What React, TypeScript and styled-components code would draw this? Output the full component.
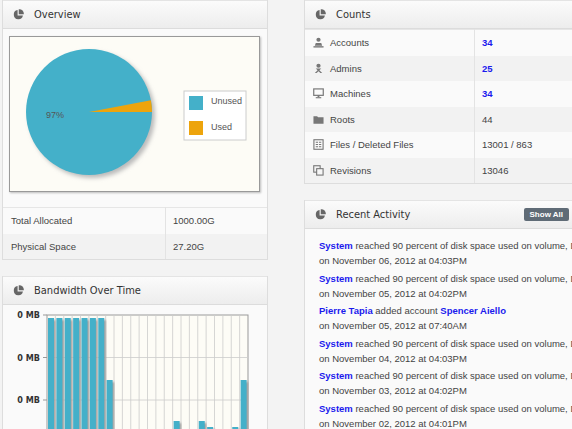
import React from "react";
import styled, { createGlobalStyle } from "styled-components";

const Global = createGlobalStyle`
  body { margin:0; background:#f3f3f3; font-family:"Liberation Sans", Arial, sans-serif; font-size:10px; color:#444; overflow:hidden; }
`;

const counts = [
  { icon: "user", label: "Accounts", value: "34", link: true },
  { icon: "admin", label: "Admins", value: "25", link: true },
  { icon: "monitor", label: "Machines", value: "34", link: true },
  { icon: "folder", label: "Roots", value: "44" },
  { icon: "files", label: "Files / Deleted Files", value: "13001 / 863" },
  { icon: "rev", label: "Revisions", value: "13046" },
];

const activity = [
  { who: "System", text: " reached 90 percent of disk space used on volume, D:", when: "on November 06, 2012 at 04:03PM" },
  { who: "System", text: " reached 90 percent of disk space used on volume, D:", when: "on November 05, 2012 at 04:02PM" },
  { who: "Pierre Tapia", text: " added account ", target: "Spencer Aiello", when: "on November 05, 2012 at 07:40AM" },
  { who: "System", text: " reached 90 percent of disk space used on volume, D:", when: "on November 04, 2012 at 04:03PM" },
  { who: "System", text: " reached 90 percent of disk space used on volume, D:", when: "on November 03, 2012 at 04:02PM" },
  { who: "System", text: " reached 90 percent of disk space used on volume, D:", when: "on November 02, 2012 at 04:01PM" },
];

// bar tops in px from plot top (plot top = 0), null = below view
const bars: (number | null)[] = [3, 3, 3, 3, 3, 3, 3, 65, null, null, null, null, null, null, null, 106, null, null, 106, 112, null, null, 112, 65];

const PieIcon = () => (
  <svg width="11" height="11" viewBox="0 0 12 12">
    <path d="M5 1.2A5 5 0 1 0 10.8 7H5z" fill="#666" />
    <path d="M6.3 0.2A5 5 0 0 1 11.8 5.7H6.3z" fill="#666" />
  </svg>
);

const RowIcon = ({ kind }: { kind: string }) => {
  const c = "#777";
  switch (kind) {
    case "user":
      return (<svg width="11" height="11" viewBox="0 0 12 12"><circle cx="6" cy="3" r="2.3" fill={c} /><path d="M3 6.5h6l1 3H2z" fill={c} /><rect x="0.5" y="10" width="11" height="1.5" fill={c} /></svg>);
    case "admin":
      return (<svg width="11" height="11" viewBox="0 0 12 12"><circle cx="6" cy="3" r="2.3" fill={c} /><path d="M3 6h6l-2 2 3 3H8L6 9 4 11H2l3-3z" fill={c} /></svg>);
    case "monitor":
      return (<svg width="11" height="11" viewBox="0 0 12 12"><rect x="0.8" y="1" width="10.4" height="7" fill="none" stroke={c} strokeWidth="1.3" /><rect x="5" y="8" width="2" height="2" fill={c} /><rect x="3" y="10" width="6" height="1.2" fill={c} /></svg>);
    case "folder":
      return (<svg width="11" height="11" viewBox="0 0 12 12"><path d="M0.5 2.5h4l1 1h6v7h-11z" fill={c} /></svg>);
    case "files":
      return (<svg width="11" height="11" viewBox="0 0 12 12"><rect x="1" y="0.8" width="10" height="10.4" fill="none" stroke={c} strokeWidth="1.2" /><path d="M3 3.5h2.5M6.5 3.5H9M3 6h2.5M6.5 6H9M3 8.5h2.5M6.5 8.5H9" stroke={c} strokeWidth="1.2" /></svg>);
    default:
      return (<svg width="11" height="11" viewBox="0 0 12 12"><rect x="0.8" y="0.8" width="7" height="7" fill="none" stroke={c} strokeWidth="1.2" /><rect x="4" y="4" width="7" height="7" fill="#f6f6f6" stroke={c} strokeWidth="1.2" /></svg>);
  }
};

const Pie = () => {
  const cx = 79, cy = 75, r = 63;
  const a = (-10.8 * Math.PI) / 180;
  const x2 = cx + r * Math.cos(a), y2 = cy + r * Math.sin(a);
  return (
    <svg width="249" height="154" viewBox="0 0 249 154">
      <defs>
        <filter id="sh" x="-20%" y="-20%" width="140%" height="140%">
          <feGaussianBlur stdDeviation="2" />
        </filter>
      </defs>
      <circle cx={cx + 3} cy={cy + 3} r={r} fill="#bbb" filter="url(#sh)" />
      <circle cx={cx} cy={cy} r={r} fill="#44b0c9" />
      <path d={`M${cx} ${cy}L${cx + r} ${cy}A${r} ${r} 0 0 0 ${x2} ${y2}Z`} fill="#eda40c" />
      <text x="36" y="81" fontSize="9" fill="#555" fontFamily="Liberation Sans, Arial, sans-serif">97%</text>
      <rect x="174" y="54" width="62" height="49" fill="#fff" stroke="#ccc" strokeWidth="1" />
      <rect x="179" y="59" width="14" height="14" fill="#44b0c9" />
      <rect x="179" y="84" width="14" height="14" fill="#eda40c" />
      <text x="201" y="67" fontSize="9" fill="#555" fontFamily="Liberation Sans, Arial, sans-serif">Unused</text>
      <text x="201" y="93" fontSize="9" fill="#555" fontFamily="Liberation Sans, Arial, sans-serif">Used</text>
    </svg>
  );
};

const BarChart = () => {
  const left = 44, top = 10, w = 201, colW = w / 24, h = 200;
  const ticks = [top, top + 42.5, top + 85];
  return (
    <svg width="265" height="130" viewBox="0 0 265 130">
      <defs>
        <filter id="bs"><feGaussianBlur stdDeviation="0.8" /></filter>
      </defs>
      <rect x={left} y={top} width={w} height={h} fill="#fdfcf6" stroke="#999" />
      {Array.from({ length: 23 }, (_, i) => (
        <line key={i} x1={left + colW * (i + 1)} x2={left + colW * (i + 1)} y1={top} y2={top + h} stroke="#ccc" strokeWidth="0.8" />
      ))}
      {ticks.slice(1).map((y) => (
        <line key={y} x1={left} x2={left + w} y1={y} y2={y} stroke="#ccc" strokeWidth="0.8" />
      ))}
      {ticks.map((y) => (
        <g key={y}>
          <line x1={left - 4} x2={left} y1={y} y2={y} stroke="#999" />
          <text x={left - 7} y={y + 3} textAnchor="end" fontSize="9" fill="#333" fontWeight="bold" fontFamily="DejaVu Sans Condensed, sans-serif">0 MB</text>
        </g>
      ))}
      {bars.map((t, i) =>
        t === null ? null : (
          <g key={i}>
            <rect x={left + colW * i + 2.5} y={top + t + 2} width={6} height={h} fill="#999" filter="url(#bs)" />
            <rect x={left + colW * i + 1} y={top + t} width={6} height={h} fill="#44b0c9" />
          </g>
        )
      )}
    </svg>
  );
};

export default function App() {
  return (
    <>
      <Global />
      <Page>
        <Column>
          <Panel>
            <PanelHead><PieIcon /><HeadTitle>Overview</HeadTitle></PanelHead>
            <ChartArea>
              <ChartBox><Pie /></ChartBox>
            </ChartArea>
            <Table>
              <tbody>
                <Tr><Td>Total Allocated</Td><Td>1000.00G</Td></Tr>
                <Tr alt><Td>Physical Space</Td><Td>27.20G</Td></Tr>
              </tbody>
            </Table>
          </Panel>
          <Panel>
            <PanelHead><PieIcon /><HeadTitle>Bandwidth Over Time</HeadTitle></PanelHead>
            <BarChart />
          </Panel>
        </Column>
        <Column>
          <Panel>
            <PanelHead><PieIcon /><HeadTitle>Counts</HeadTitle></PanelHead>
            <Table>
              <tbody>
                {counts.map((c, i) => (
                  <Tr key={c.label} alt={i % 2 === 1}>
                    <Td wide><Label><RowIcon kind={c.icon} />{c.label}</Label></Td>
                    <Td>{c.link ? <Num>{c.value}</Num> : c.value}</Td>
                  </Tr>
                ))}
              </tbody>
            </Table>
          </Panel>
          <Panel>
            <PanelHead>
              <PieIcon /><HeadTitle>Recent Activity</HeadTitle>
              <ShowAll>Show All</ShowAll>
            </PanelHead>
            <Feed>
              {activity.map((a, i) => (
                <Item key={i}>
                  <div><A>{a.who}</A>{a.text}{a.target && <A>{a.target}</A>}</div>
                  <div>{a.when}</div>
                </Item>
              ))}
            </Feed>
          </Panel>
        </Column>
      </Page>
    </>
  );
}

const Page = styled.div`display:grid; grid-template-columns:266px 276px; column-gap:36px; padding:0 0 0 2px; width:700px;`;
const Column = styled.div`display:flex; flex-direction:column; gap:16px;`;
const Panel = styled.div`background:#fafafa; border:1px solid #ddd; border-top:none;`;
const PanelHead = styled.div`
  height:27px; display:flex; align-items:center; gap:10px; padding:0 10px;
  background:linear-gradient(#fbfbfb, #ededed); border-bottom:1px solid #dcdcdc; border-top:1px solid #e4e4e4;
`;
const HeadTitle = styled.div`flex:1; font-family:"DejaVu Sans Condensed", sans-serif; font-size:11px; color:#333; margin-top:-1px;`;
const ShowAll = styled.button`
  background:#5f6b76; color:#fff; border:none; border-radius:2px; font-family:"Liberation Sans", Arial, sans-serif;
  font-size:8px; font-weight:bold; padding:2px 6px; height:13px; line-height:9px;
`;
const ChartArea = styled.div`padding:7px 7px 15px 6px;`;
const ChartBox = styled.div`width:249px; height:154px; border:1px solid #999; background:#fdfcf6; box-shadow:1px 1px 2px rgba(0,0,0,.25); line-height:0;`;
const Table = styled.table`width:100%; border-collapse:collapse; border-top:1px solid #e6e6e6;`;
const Tr = styled.tr<{ alt?: boolean }>`background:${(p) => (p.alt ? "#f2f2f2" : "#fafafa")}; & + & td { border-top:1px solid #e3e3e3; }`;
const Td = styled.td<{ wide?: boolean }>`
  height:25.5px; padding:0 8px; font-size:9.5px; color:#444;
  & + & { border-left:1px solid #e3e3e3; padding-left:7px; }
  &:first-child { width:${(p) => (p.wide ? "153px" : "146px")}; }
`;
const Label = styled.span`display:flex; align-items:center; gap:6px;`;
const Num = styled.span`color:#1a1aee; font-weight:bold;`;
const Feed = styled.div`padding:9px 14px 0;`;
const Item = styled.div`font-size:9.5px; line-height:15px; color:#444; margin-bottom:2.5px; white-space:nowrap;`;
const A = styled.span`color:#1a1aee; font-weight:bold;`;
